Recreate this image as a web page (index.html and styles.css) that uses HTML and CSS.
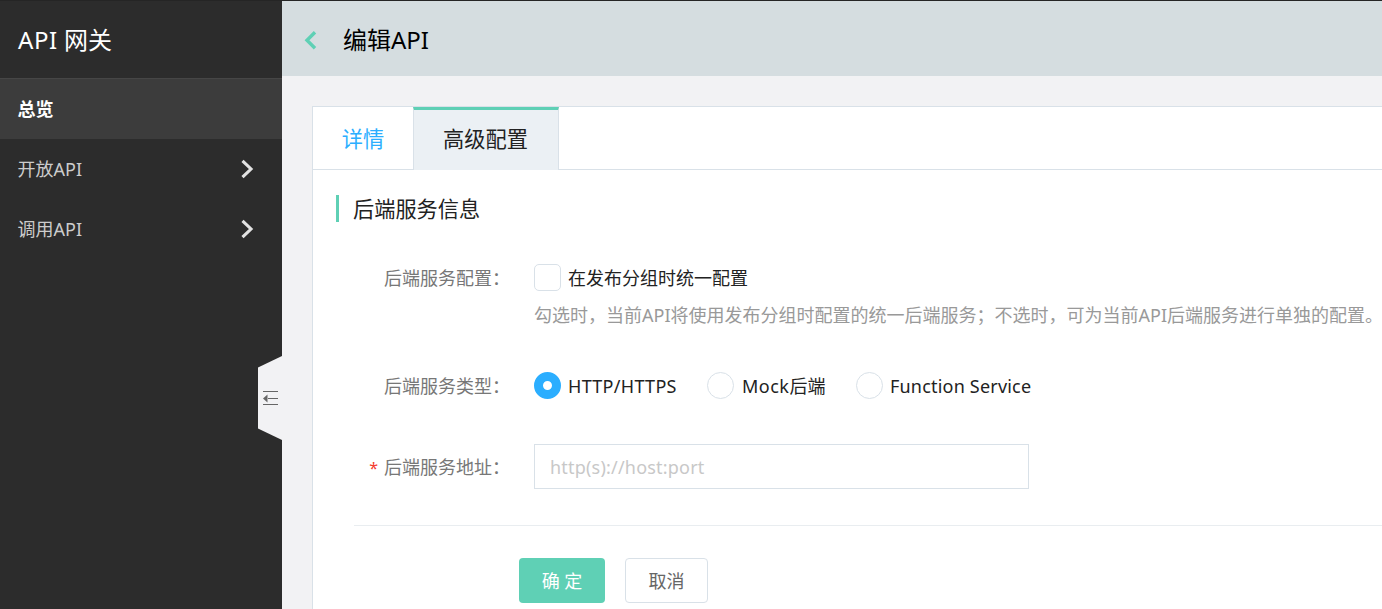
FILE: index.html
```html
<!DOCTYPE html>
<html lang="zh-CN">
<head>
<meta charset="utf-8">
<title>API 网关</title>
<link rel="stylesheet" href="styles.css">
</head>
<body>
<div class="app">
  <aside class="sidebar">
    <div class="brand"><span class="brand-latin">API</span> 网关</div>
    <nav class="menu">
      <a class="menu-item active">总览</a>
      <a class="menu-item"><span>开放API</span><svg class="arrow" width="14" height="20" viewBox="0 0 14 20"><path d="M1.500 1.800 10 10 1.500 18.200" fill="none" stroke="#e2e2e2" stroke-width="3.100"/></svg></a>
      <a class="menu-item"><span>调用API</span><svg class="arrow" width="14" height="20" viewBox="0 0 14 20"><path d="M1.500 1.800 10 10 1.500 18.200" fill="none" stroke="#e2e2e2" stroke-width="3.100"/></svg></a>
    </nav>
    <svg class="collapse" width="24" height="86" viewBox="0 0 24 86">
      <path d="M24 1V85L0 73.500V12.500Z" fill="#f2f2f4"/>
      <path d="M5 36.500H20M10 43.500H20M5 49.500H20" stroke="#666" stroke-width="1.200" fill="none"/>
      <path d="M5 43.500 9.500 39.500V47.500Z" fill="#666"/>
    </svg>
  </aside>
  <main class="main">
    <header class="header">
      <svg class="back" width="14" height="20" viewBox="0 0 14 20"><path d="M11 2.200 3 10.200 11 18.200" fill="none" stroke="#5fd0b5" stroke-width="3.400"/></svg>
      <h1 class="title">编辑API</h1>
    </header>
    <section class="card">
      <div class="tabs">
        <a class="tab link">详情</a>
        <a class="tab current">高级配置</a>
      </div>
      <h2 class="section-title">后端服务信息</h2>
      <div class="form">
        <div class="row row-config">
          <div class="label">后端服务配置：</div>
          <div>
            <label class="option"><span class="box"></span><span class="option-text">在发布分组时统一配置</span></label>
            <p class="help">勾选时，当前API将使用发布分组时配置的统一后端服务；不选时，可为当前API后端服务进行单独的配置。</p>
          </div>
        </div>
        <div class="row row-type">
          <div class="label">后端服务类型：</div>
          <div class="options">
            <label class="option opt-http"><span class="radio checked"></span><span class="option-text latin">HTTP/HTTPS</span></label>
            <label class="option opt-mock"><span class="radio"></span><span class="option-text mock"><span>Mock</span>后端</span></label>
            <label class="option"><span class="radio"></span><span class="option-text service">Function Service</span></label>
          </div>
        </div>
        <div class="row row-address">
          <div class="label"><span class="required">*</span>后端服务地址：</div>
          <input class="input" type="text" placeholder="http(s)://host:port">
        </div>
      </div>
      <div class="actions">
        <button class="btn primary">确 定</button>
        <button class="btn">取消</button>
      </div>
    </section>
  </main>
</div>
</body>
</html>
```
FILE: styles.css
```css
* { box-sizing: border-box; }
body {
  margin: 0;
  overflow: hidden;
  background: #f2f2f4;
  color: #222;
  font: 18px/27px "Noto Sans", "Noto Sans CJK SC", sans-serif;
  white-space: nowrap;
  text-spacing-trim: space-all;
}
.app { display: flex; height: 609px; border-top: 1px solid #252525; }
.sidebar { position: relative; flex: 0 0 282px; background: #2c2c2c; color: #fff; }
.brand { height: 77px; padding-left: 18px; font-size: 24px; line-height: 77px; }
.brand-latin { letter-spacing: 0.6px; }
.menu-item {
  display: flex;
  align-items: center;
  justify-content: space-between;
  height: 60px;
  padding: 0 27px 0 17.5px;
  color: #ccc;
}
.menu-item.active { height: 61px; padding-top: 1px; border-top: 1px solid #464646; background: #3c3c3c; color: #fff; font-weight: 700; }
.collapse { position: absolute; right: 0; top: 354px; }
.main { flex: 1; min-width: 0; }
.header { display: flex; align-items: center; height: 75px; padding-left: 22px; background: #d5dde0; }
.back { margin-top: 2px; }
.title { margin: 2px 0 0 25px; font-size: 24px; font-weight: 400; color: #000; }
.card { height: 520px; margin: 30px 0 0 30px; border: 1px solid #d9e1e8; border-width: 1px 0 0 1px; background: #fff; }
.tabs { display: flex; height: 63px; border-bottom: 1px solid #d9e1e8; }
.tab { height: 63px; font-size: 21.200px; line-height: 64px; text-align: center; }
.link { width: 100px; height: 62px; color: #2baeff; }
.current { width: 146px; padding-right: 1px; border: 1px solid #d9e1e8; border-top: 3px solid #5fd0b5; border-bottom: 0; background: #ebf0f4; line-height: 58px; }
.section-title { margin: 25px 0 0 23px; height: 27px; padding-left: 14px; border-left: 3px solid #5fd0b5; font-size: 21.200px; font-weight: 400; line-height: 28px; }
.form { margin-left: 41px; padding-bottom: 36px; border-bottom: 1px solid #e9edf0; }
.row { display: flex; }
.row-config { padding-top: 42px; }
.row-type { padding-top: 39px; }
.row-address { padding-top: 45px; }
.label { flex: 0 0 156px; margin-right: 24px; color: #777; text-align: right; line-height: 29px; }
.option { display: flex; align-items: center; gap: 7px; height: 27px; }
.option-text { padding-top: 2px; }
.box, .radio { flex: none; width: 27px; height: 27px; border: 1px solid #d9e1e8; border-radius: 5px; background: #fff; }
.radio { border-radius: 50%; }
.radio.checked { border: 9px solid #2baeff; }
.help { margin: 11px 0 0; height: 31px; color: #999; line-height: 27px; }
.options { display: flex; height: 27px; }
.latin { letter-spacing: 0.300px; }
.mock { padding-left: 1px; }
.mock span { letter-spacing: 0.500px; }
.service { letter-spacing: 0.200px; }
.opt-http { width: 173px; }
.opt-mock { width: 149px; }
.row-type { height: 66px; }
.row-address { height: 90px; }
.required { margin-right: 6px; color: #f43b2e; font-size: 16px; }
.row-address .label { line-height: 47px; }
.input { width: 495px; height: 45px; padding: 0 15px; border: 1px solid #d9e1e8; background: #fff; font: inherit; letter-spacing: 0.200px; }
.input::placeholder { color: #c8c8c8; opacity: 1; }
.actions { display: flex; gap: 20px; padding: 32px 0 0 206px; }
.btn { width: 83px; height: 45px; padding: 2px 0 0; border: 1px solid #d9e1e8; border-radius: 4px; background: #fff; color: #666; font: inherit; }
.btn.primary { width: 86px; border: 0; background: #5fd0b5; color: #fff; }
```
